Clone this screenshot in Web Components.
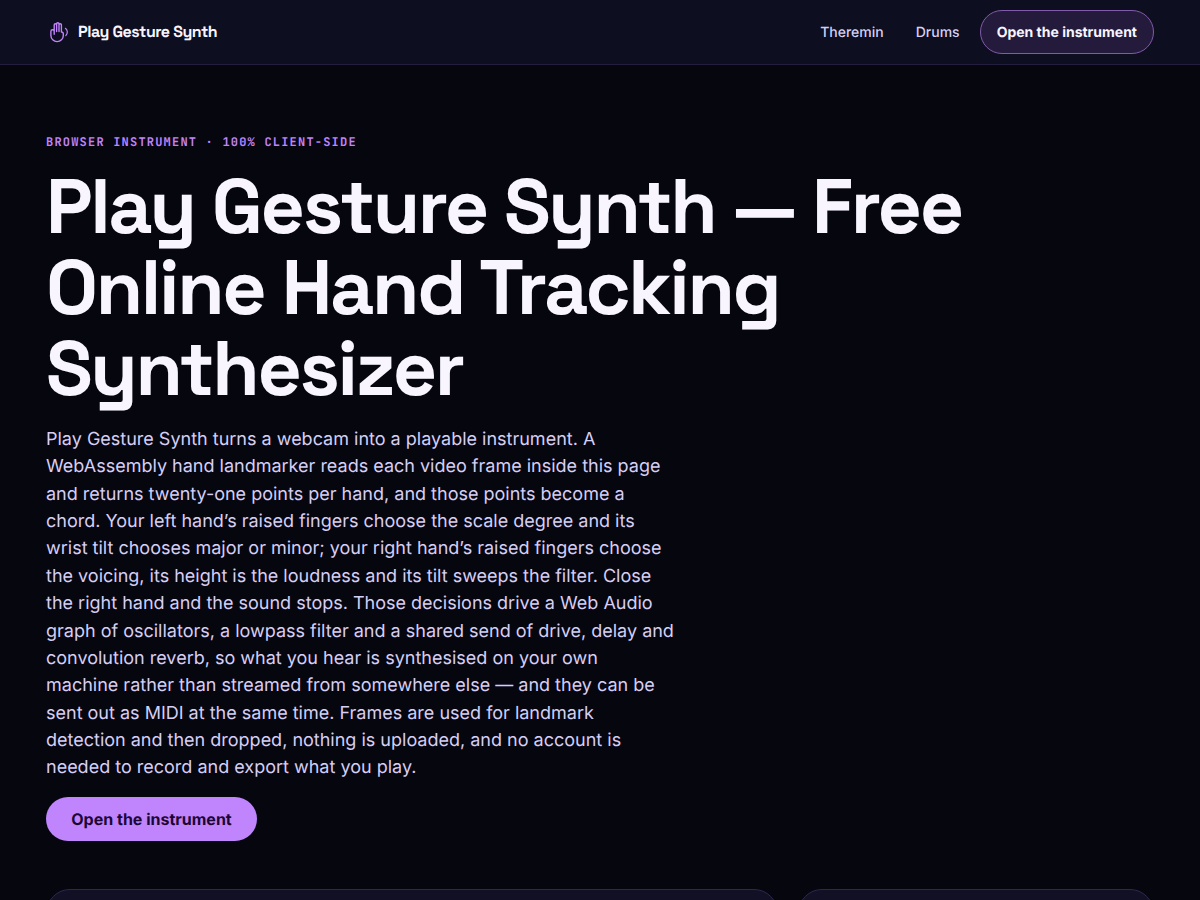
<!DOCTYPE html>
<html lang="en">
<head>
<meta charset="utf-8">
<meta name="viewport" content="width=device-width, initial-scale=1">
<title>Play Gesture Synth</title>
<style>
  :root {
    --bg: #06060f;
    --bar: #0d0e1f;
    --line: #241d3d;
    --accent: #c084fc;
    --text: #f8f5ff;
    --soft: #d6cff5;
    --gutter: 46px;
    --display: "Space Grotesk", Inter, sans-serif;
  }
  body {
    margin: 0;
    background: var(--bg);
    color: var(--text);
    font-family: Inter, sans-serif;
    text-rendering: geometricPrecision;
  }
</style>
</head>
<body>
<synth-header>
  <synth-logo slot="brand">Play Gesture Synth</synth-logo>
  <nav-link href="#theremin">Theremin</nav-link>
  <nav-link href="#drums">Drums</nav-link>
  <pill-link href="#play" variant="outline">Open the instrument</pill-link>
</synth-header>
<main>
  <synth-hero>
    <span slot="eyebrow">Browser instrument · 100% client-side</span>
    <span slot="title">Play Gesture Synth — Free Online Hand Tracking Synthesizer</span>
    <span slot="lede">Play Gesture Synth turns a webcam into a playable instrument. A WebAssembly hand landmarker reads each video frame inside this page and returns twenty-one points per hand, and those points become a chord. Your left hand’s raised fingers choose the scale degree and its wrist tilt chooses major or minor; your right hand’s raised fingers choose the voicing, its height is the loudness and its tilt sweeps the filter. Close the right hand and the sound stops. Those decisions drive a Web Audio graph of oscillators, a lowpass filter and a shared send of drive, delay and convolution reverb, so what you hear is synthesised on your own machine rather than streamed from somewhere else — and they can be sent out as MIDI at the same time. Frames are used for landmark detection and then dropped, nothing is uploaded, and no account is needed to record and export what you play.</span>
    <pill-link slot="action" href="#play" variant="solid">Open the instrument</pill-link>
  </synth-hero>
  <card-grid>
    <synth-card wide></synth-card>
    <synth-card></synth-card>
  </card-grid>
</main>
<script>
  function define(name, html) {
    const template = document.createElement('template');
    template.innerHTML = html;
    customElements.define(name, class extends HTMLElement {
      constructor() {
        super();
        this.attachShadow({ mode: 'open' }).append(template.content.cloneNode(true));
      }
      connectedCallback() {
        const link = this.shadowRoot.querySelector('a');
        if (link && this.hasAttribute('href')) link.href = this.getAttribute('href');
      }
    });
  }

  define('synth-header', `
    <style>
      :host { display: block; background: var(--bar); border-bottom: 1px solid var(--line); }
      header { display: flex; align-items: center; justify-content: space-between; min-height: 64px; padding: 0 var(--gutter); }
      nav { display: flex; align-items: center; gap: 4px; }
      ::slotted(pill-link) { margin-left: 2px; }
    </style>
    <header><slot name="brand"></slot><nav aria-label="Main"><slot></slot></nav></header>`);

  define('synth-logo', `
    <style>
      :host { display: block; }
      a { display: flex; align-items: center; gap: 8px; color: var(--text); text-decoration: none; font: 700 16px/24px var(--display); letter-spacing: -0.03em; }
      svg { width: 24px; height: 24px; color: var(--accent); }
    </style>
    <a href="#top">
      <svg viewBox="0 0 24 24" fill="none" stroke="currentColor" stroke-width="1.4" stroke-linecap="round" stroke-linejoin="round" aria-hidden="true">
        <path d="M8.2 12.5V4.9a1.2 1.2 0 0 1 2.4 0V11.5M10.6 11V3.9a1.2 1.2 0 0 1 2.4 0V11.5M13 11V4.9a1.2 1.2 0 0 1 2.4 0V12M15.4 12c1.2 0 1.9.8 1.9 1.9v1.5a6.2 6.2 0 0 1-12.4 0V11.4a1.65 1.65 0 0 1 3.3 0v2.9"/>
        <path d="M19.4 8.3c2.4 1.9 2.6 5.1.4 7.3" stroke-width="1.2"/>
      </svg>
      <slot></slot>
    </a>`);

  define('nav-link', `
    <style>
      :host { display: block; }
      a { display: flex; align-items: center; min-height: 44px; padding: 0 14px; color: var(--soft); text-decoration: none; font-size: 14px; font-weight: 500; }
    </style>
    <a><slot></slot></a>`);

  define('pill-link', `
    <style>
      :host { display: inline-block; }
      a { display: flex; align-items: center; justify-content: center; box-sizing: border-box; min-height: 44px; border-radius: 22px; text-decoration: none; white-space: nowrap; font-weight: 700; }
      :host([variant="outline"]) a { padding: 0 16px; border: 1px solid #805ba9; background: #241a3b; color: var(--text); font-size: 14px; }
      :host([variant="solid"]) a { min-width: 211px; padding: 0 24px; background: var(--accent); color: #1b0638; font-size: 16px; }
    </style>
    <a><slot></slot></a>`);

  define('synth-hero', `
    <style>
      :host { display: block; padding: 68px var(--gutter) 48px; }
      .eyebrow { margin: 0 0 16px; color: var(--accent); font: 700 12px/18px "JetBrains Mono", "Liberation Mono", monospace; letter-spacing: 0.1em; text-transform: uppercase; }
      h1 { max-width: 960px; margin: 0 0 16px; font: 700 77px/81px var(--display); letter-spacing: -0.03em; }
      .lede { max-width: 628px; margin: 0 0 15px; color: var(--soft); font-size: 18px; line-height: 1.52; }
      ::slotted([slot="action"]) { vertical-align: top; }
    </style>
    <p class="eyebrow"><slot name="eyebrow"></slot></p>
    <h1><slot name="title"></slot></h1>
    <p class="lede"><slot name="lede"></slot></p>
    <slot name="action"></slot>`);

  define('card-grid', `
    <style>
      :host { display: grid; grid-template-columns: repeat(12, 1fr); gap: 20px; padding: 0 var(--gutter) 48px; }
      ::slotted(synth-card) { grid-column: span 4; }
      ::slotted(synth-card[wide]) { grid-column: span 8; }
    </style>
    <slot></slot>`);

  define('synth-card', `
    <style>
      :host { display: block; box-sizing: border-box; min-height: 240px; border: 1px solid #2e2750; border-radius: 24px; background: #121024; }
    </style>
    <slot></slot>`);
</script>
</body>
</html>
